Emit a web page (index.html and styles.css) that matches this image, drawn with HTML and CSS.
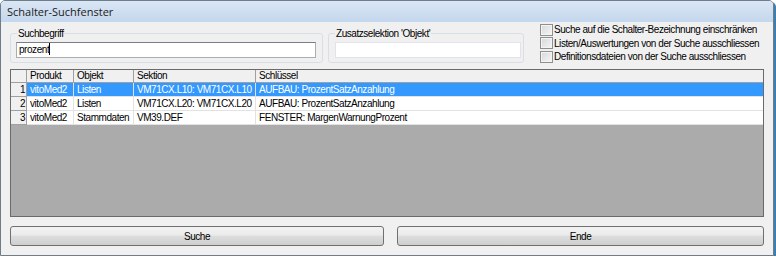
FILE: index.html
```html
<!DOCTYPE html>
<html lang="de">
  <head>
    <meta charset="UTF-8" />
    <title>Schalter-Suchfenster</title>
    <link rel="stylesheet" href="styles.css">
  </head>
  <body>
    <div class="window">
      <div class="titlebar">Schalter-Suchfenster</div>
      <div class="content">
        <div class="top-row">
          <div class="group group-search">
            <span class="group-label">Suchbegriff</span>
            <div class="textbox">prozent<span class="caret"></span></div>
          </div>
          <div class="group group-object">
            <span class="group-label">Zusatzselektion 'Objekt'</span>
            <div class="textbox textbox-flat"></div>
          </div>
          <div class="options">
            <div class="option"><span class="checkbox"></span>Suche auf die Schalter-Bezeichnung einschränken</div>
            <div class="option"><span class="checkbox"></span>Listen/Auswertungen von der Suche ausschliessen</div>
            <div class="option"><span class="checkbox"></span>Definitionsdateien von der Suche ausschliessen</div>
          </div>
        </div>

        <div class="results">
          <div class="results-grid">
            <div class="cell head"></div>
            <div class="cell head">Produkt</div>
            <div class="cell head">Objekt</div>
            <div class="cell head">Sektion</div>
            <div class="cell head last">Schlüssel</div>

            <div class="cell num">1</div>
            <div class="cell sel">vitoMed2</div>
            <div class="cell sel">Listen</div>
            <div class="cell sel">VM71CX.L10: VM71CX.L10</div>
            <div class="cell sel last">AUFBAU: ProzentSatzAnzahlung</div>

            <div class="cell num">2</div>
            <div class="cell">vitoMed2</div>
            <div class="cell">Listen</div>
            <div class="cell">VM71CX.L20: VM71CX.L20</div>
            <div class="cell last">AUFBAU: ProzentSatzAnzahlung</div>

            <div class="cell num">3</div>
            <div class="cell">vitoMed2</div>
            <div class="cell">Stammdaten</div>
            <div class="cell">VM39.DEF</div>
            <div class="cell last">FENSTER: MargenWarnungProzent</div>
          </div>
        </div>

        <div class="buttons">
          <button type="button" class="btn btn-search">Suche</button>
          <button type="button" class="btn btn-end">Ende</button>
        </div>
      </div>
    </div>
  </body>
</html>
```

FILE: styles.css
```css
* {
  margin: 0;
  padding: 0;
  box-sizing: border-box;
}

body {
  background-color: #ffffff;
  font-family: "Liberation Sans", Arial, sans-serif;
  font-size: 10px;
  letter-spacing: -0.45px;
  color: #000;
}

.window {
  width: 774px;
  height: 256px;
  border: 1px solid #6f7d8b;
  border-radius: 5px 5px 0 0;
  background-color: #f0f0f0;
  box-shadow: 2px 2px 0 #3c7eae;
  overflow: hidden;
}

.titlebar {
  height: 21px;
  padding: 3px 0 0 6px;
  background: linear-gradient(#dae6f4, #c4d7ed);
  font-family: "Open Sans", "Liberation Sans", sans-serif;
  font-size: 11px;
  letter-spacing: 0;
  line-height: 15px;
  color: #1a1a1a;
}

.content {
  padding: 0 9px 0 9px;
}

.top-row {
  display: flex;
  height: 41px;
}

.group {
  position: relative;
  flex-shrink: 0;
  margin-top: 11px;
  height: 30px;
  border: 1px solid #d5dfe5;
  border-radius: 3px;
}

.group-label {
  position: absolute;
  top: -7px;
  left: 6px;
  padding: 0 1px;
  background-color: #f0f0f0;
  line-height: 13px;
}

.group-search {
  width: 313px;
  padding: 8px 0 0 5px;
}

.group-object {
  width: 196px;
  margin-left: 5px;
  padding: 8px 0 0 6px;
}

.textbox {
  height: 16px;
  border: 1px solid #abadb3;
  border-top-color: #7a7e86;
  background-color: #fff;
  padding-left: 2px;
  line-height: 14px;
}

.group-search .textbox {
  width: 300px;
}

.group-object .textbox {
  width: 186px;
}

.textbox-flat {
  border-color: #e2e3ea;
}

.caret {
  display: inline-block;
  width: 1px;
  height: 12px;
  background-color: #000;
  vertical-align: -2px;
}

.options {
  margin-left: 16px;
  padding-top: 1px;
}

.option {
  display: flex;
  align-items: center;
  height: 13.5px;
  white-space: nowrap;
}

.checkbox {
  display: inline-block;
  flex-shrink: 0;
  width: 13px;
  height: 12px;
  margin-right: 1px;
  border: 1px solid #8e8f8f;
  background: linear-gradient(135deg, #d8d8d8, #f6f6f6);
  box-shadow: inset 0 0 0 1px #f4f4f4;
}

.results {
  margin-top: 6px;
  height: 148px;
  border: 1px solid #6a6a6a;
  background-color: #ababab;
}

.results-grid {
  display: grid;
  grid-template-columns: 16px 47px 60px 122px 1fr;
  grid-template-rows: 13px 14px 14px 14px;
}

.cell {
  border-right: 1px solid #e2e2e2;
  border-bottom: 1px solid #e2e2e2;
  background-color: #fff;
  padding-left: 3px;
  line-height: 13px;
  white-space: nowrap;
  overflow: hidden;
}

.cell.last {
  border-right: none;
}

.head {
  background-color: #f0f0f0;
  border-right-color: #a0a0a0;
  border-bottom-color: #a0a0a0;
  line-height: 12px;
}

.num {
  background-color: #f0f0f0;
  border-right-color: #a0a0a0;
  border-bottom-color: #a0a0a0;
  text-align: right;
  padding: 0 1px 0 0;
}

.sel {
  background-color: #3399ff;
  color: #fff;
}

.buttons {
  display: flex;
  gap: 13px;
  margin-top: 9px;
}

.btn {
  height: 20px;
  border: 1px solid #707070;
  border-radius: 3px;
  background: linear-gradient(#f2f2f2 0%, #ebebeb 45%, #dddddd 50%, #cfcfcf 100%);
  font-family: inherit;
  font-size: 10px;
  letter-spacing: -0.45px;
  color: #000;
}

.btn-search {
  width: 374px;
}

.btn-end {
  width: 367px;
}
```
